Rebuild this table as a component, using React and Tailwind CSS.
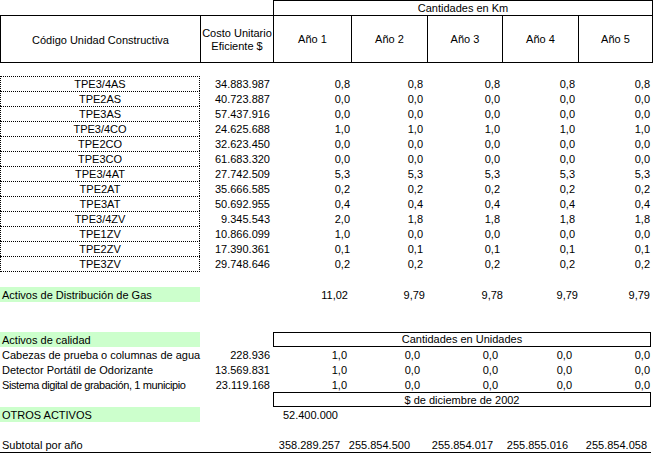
import React from "react";

const yearCols = ["w-[78px]", "w-[76px]", "w-[75px]", "w-[76px]", "w-[75px]"];

// right edges differ a little per block in the sheet, so each block has its own cell widths
const kmCells = ["w-[77px]", "w-[73px]", "w-[77px]", "w-[75px]", "w-[75px]"];
const totalCells = ["w-[75px]", "w-[77px]", "w-[78px]", "w-[75px]", "w-[72px]"];
const unitCells = ["w-[74px]", "w-[73px]", "w-[78px]", "w-[74px]", "w-[78px]"];
const subCells = ["w-[67px]", "w-[70px]", "w-[83px]", "w-[75px]", "w-[79px]"];

const rows = [
  { code: "TPE3/4AS", cost: "34.883.987", v: ["0,8", "0,8", "0,8", "0,8", "0,8"] },
  { code: "TPE2AS", cost: "40.723.887", v: ["0,0", "0,0", "0,0", "0,0", "0,0"] },
  { code: "TPE3AS", cost: "57.437.916", v: ["0,0", "0,0", "0,0", "0,0", "0,0"] },
  { code: "TPE3/4CO", cost: "24.625.688", v: ["1,0", "1,0", "1,0", "1,0", "1,0"] },
  { code: "TPE2CO", cost: "32.623.450", v: ["0,0", "0,0", "0,0", "0,0", "0,0"] },
  { code: "TPE3CO", cost: "61.683.320", v: ["0,0", "0,0", "0,0", "0,0", "0,0"] },
  { code: "TPE3/4AT", cost: "27.742.509", v: ["5,3", "5,3", "5,3", "5,3", "5,3"] },
  { code: "TPE2AT", cost: "35.666.585", v: ["0,2", "0,2", "0,2", "0,2", "0,2"] },
  { code: "TPE3AT", cost: "50.692.955", v: ["0,4", "0,4", "0,4", "0,4", "0,4"] },
  { code: "TPE3/4ZV", cost: "9.345.543", v: ["2,0", "1,8", "1,8", "1,8", "1,8"] },
  { code: "TPE1ZV", cost: "10.866.099", v: ["1,0", "0,0", "0,0", "0,0", "0,0"] },
  { code: "TPE2ZV", cost: "17.390.361", v: ["0,1", "0,1", "0,1", "0,1", "0,1"] },
  { code: "TPE3ZV", cost: "29.748.646", v: ["0,2", "0,2", "0,2", "0,2", "0,2"] },
];

const calidad = [
  { name: "Cabezas de prueba o columnas de agua", cost: "228.936", v: ["1,0", "0,0", "0,0", "0,0", "0,0"], tight: false },
  { name: "Detector Portátil de Odorizante", cost: "13.569.831", v: ["1,0", "0,0", "0,0", "0,0", "0,0"], tight: false },
  { name: "Sistema digital de grabación, 1 municipio", cost: "23.119.168", v: ["1,0", "0,0", "0,0", "0,0", "0,0"], tight: true },
];

function Values({ cells, values }) {
  return (
    <div className="flex">
      {values.map((val, i) => (
        <div key={i} className={`${cells[i]} text-right`}>{val}</div>
      ))}
    </div>
  );
}

export default function App() {
  return (
    <div className="w-[655px] h-[453px] bg-white text-black text-[11px] leading-[15px] font-['Liberation_Sans',Arial,sans-serif] overflow-hidden">
      {/* top group title */}
      <div className="flex h-[15px]">
        <div className="w-[273px]" />
        <div className="w-[380px] border-t border-l border-r border-black text-center leading-[14px]">
          Cantidades en Km
        </div>
      </div>

      {/* header */}
      <div className="flex h-[48px] w-[653px] border border-black">
        <div className="w-[199px] flex items-center justify-center pt-[2px]">Código Unidad Constructiva</div>
        <div className="w-[73px] border-l border-black flex flex-col items-center justify-center leading-[13px] pt-[2px]">
          <span>Costo Unitario</span>
          <span>Eficiente $</span>
        </div>
        {yearCols.map((w, i) => (
          <div key={i} className={`${w} border-l border-black flex items-center justify-center pt-[1px] ${i === 4 ? "flex-1" : ""}`}>
            Año {i + 1}
          </div>
        ))}
      </div>

      <div className="h-[13px]" />

      {/* unidades constructivas */}
      {rows.map((r, i) => {
        const last = i === rows.length - 1;
        return (
          <div key={r.code} className={`flex overflow-hidden ${last ? "h-[16px]" : "h-[15px]"}`}>
            <div
              className={`w-[200px] text-center border-dotted border-black border-l border-r border-t leading-[15px] ${
                last ? "border-b" : ""
              }`}
            >
              {r.code}
            </div>
            <div className="w-[70px] text-right leading-[16px]">{r.cost}</div>
            <div className="w-[3px]" />
            <div className="leading-[16px]">
              <Values cells={kmCells} values={r.v} />
            </div>
          </div>
        );
      })}

      <div className="h-[15px]" />

      <div className="flex h-[15px] leading-[16px]">
        <div className="w-[200px] bg-[#ccffcc] pl-[2px]">Activos de Distribución de Gas</div>
        <div className="w-[73px]" />
        <Values cells={totalCells} values={["11,02", "9,79", "9,78", "9,79", "9,79"]} />
      </div>

      <div className="h-[30px]" />

      {/* activos de calidad */}
      <div className="flex h-[15px] leading-[16px]">
        <div className="w-[200px] bg-[#ccffcc] pl-[2px]">Activos de calidad</div>
        <div className="w-[73px]" />
        <div className="w-[378px] border border-black text-center leading-[13px]">Cantidades en Unidades</div>
      </div>
      {calidad.map((c) => (
        <div key={c.name} className="flex h-[15px] leading-[17px]">
          <div className={`w-[200px] pl-[2px] whitespace-nowrap ${c.tight ? "tracking-[-0.4px]" : ""}`}>{c.name}</div>
          <div className="w-[70px] text-right">{c.cost}</div>
          <div className="w-[3px]" />
          <Values cells={unitCells} values={c.v} />
        </div>
      ))}
      <div className="flex h-[15px]">
        <div className="w-[273px]" />
        <div className="w-[378px] border border-black text-center leading-[14px]">$ de diciembre de 2002</div>
      </div>

      <div className="flex h-[15px] leading-[16px]">
        <div className="w-[200px] bg-[#ccffcc] pl-[2px]">OTROS ACTIVOS</div>
        <div className="w-[138px] text-right">52.400.000</div>
      </div>

      <div className="h-[15px]" />

      <div className="flex h-[16px] w-[651px] border-b border-black leading-[17px]">
        <div className="w-[200px] pl-[2px]">Subtotal por año</div>
        <div className="w-[73px]" />
        <Values cells={subCells} values={["358.289.257", "255.854.500", "255.854.017", "255.855.016", "255.854.058"]} />
      </div>
    </div>
  );
}
